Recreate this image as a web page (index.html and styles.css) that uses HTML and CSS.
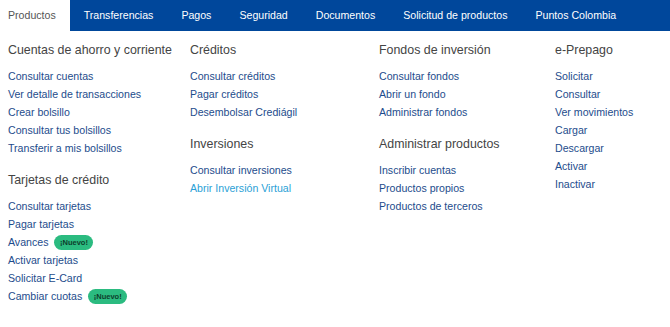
FILE: index.html
```html
<!DOCTYPE html>
<html lang="es">
<head>
    <meta charset="UTF-8">
    <title>Menú Productos</title>
    <link rel="stylesheet" href="styles.css">
</head>
<body>
    <!-- Barra principal -->
    <nav class="topnav">
        <a class="tab active" href="#">Productos</a>
        <a class="tab" href="#">Transferencias</a>
        <a class="tab" href="#">Pagos</a>
        <a class="tab" href="#">Seguridad</a>
        <a class="tab" href="#">Documentos</a>
        <a class="tab" href="#">Solicitud de productos</a>
        <a class="tab" href="#">Puntos Colombia</a>
    </nav>

    <!-- Menú desplegable de Productos -->
    <div class="mega-menu">
        <div class="menu-col">
            <div class="group">
                <div class="group-title">Cuentas de ahorro y corriente</div>
                <a class="menu-link" href="#">Consultar cuentas</a>
                <a class="menu-link" href="#">Ver detalle de transacciones</a>
                <a class="menu-link" href="#">Crear bolsillo</a>
                <a class="menu-link" href="#">Consultar tus bolsillos</a>
                <a class="menu-link" href="#">Transferir a mis bolsillos</a>
            </div>
            <div class="group">
                <div class="group-title">Tarjetas de crédito</div>
                <a class="menu-link" href="#">Consultar tarjetas</a>
                <a class="menu-link" href="#">Pagar tarjetas</a>
                <a class="menu-link" href="#">Avances <span class="badge">¡Nuevo!</span></a>
                <a class="menu-link" href="#">Activar tarjetas</a>
                <a class="menu-link" href="#">Solicitar E-Card</a>
                <a class="menu-link" href="#">Cambiar cuotas <span class="badge">¡Nuevo!</span></a>
            </div>
        </div>

        <div class="menu-col">
            <div class="group">
                <div class="group-title">Créditos</div>
                <a class="menu-link" href="#">Consultar créditos</a>
                <a class="menu-link" href="#">Pagar créditos</a>
                <a class="menu-link" href="#">Desembolsar Crediágil</a>
            </div>
            <div class="group">
                <div class="group-title">Inversiones</div>
                <a class="menu-link" href="#">Consultar inversiones</a>
                <a class="menu-link hover" href="#">Abrir Inversión Virtual</a>
            </div>
        </div>

        <div class="menu-col">
            <div class="group">
                <div class="group-title">Fondos de inversión</div>
                <a class="menu-link" href="#">Consultar fondos</a>
                <a class="menu-link" href="#">Abrir un fondo</a>
                <a class="menu-link" href="#">Administrar fondos</a>
            </div>
            <div class="group">
                <div class="group-title">Administrar productos</div>
                <a class="menu-link" href="#">Inscribir cuentas</a>
                <a class="menu-link" href="#">Productos propios</a>
                <a class="menu-link" href="#">Productos de terceros</a>
            </div>
        </div>

        <div class="menu-col">
            <div class="group">
                <div class="group-title">e-Prepago</div>
                <a class="menu-link" href="#">Solicitar</a>
                <a class="menu-link" href="#">Consultar</a>
                <a class="menu-link" href="#">Ver movimientos</a>
                <a class="menu-link" href="#">Cargar</a>
                <a class="menu-link" href="#">Descargar</a>
                <a class="menu-link" href="#">Activar</a>
                <a class="menu-link" href="#">Inactivar</a>
            </div>
        </div>
    </div>
</body>
</html>
```

FILE: styles.css
```css
body {
    font-family: "Liberation Sans", Arial, sans-serif;
    margin: 0;
    padding: 0;
    background-color: #fff;
}
.topnav {
    display: flex;
    height: 31px;
    background-color: #00479b;
}
.tab {
    display: flex;
    align-items: center;
    padding: 0 14px 1px 14px;
    font-size: 10.6px;
    color: #fff;
    text-decoration: none;
}
.tab:first-child {
    padding-left: 8px;
}
.tab.active {
    background-color: #fff;
    color: #555;
}
.mega-menu {
    display: grid;
    grid-template-columns: 182px 189px 176px 1fr;
    padding: 11px 8px 0 8px;
}
.menu-col {
    display: flex;
    flex-direction: column;
    gap: 15px;
}
.group {
    display: flex;
    flex-direction: column;
}
.group-title {
    font-size: 12.4px;
    line-height: 16px;
    color: #444;
    margin-bottom: 9px;
}
.menu-link {
    display: flex;
    align-items: center;
    height: 18px;
    font-size: 10.6px;
    color: #1d4c8c;
    text-decoration: none;
}
.menu-link.hover {
    color: #2b9fd6;
}
.badge {
    display: inline-flex;
    align-items: center;
    justify-content: center;
    width: 39px;
    height: 15px;
    margin-left: 6px;
    border-radius: 8px;
    background-color: #2bbb80;
    color: #0d3e2c;
    font-size: 7.5px;
    font-weight: bold;
}
```
